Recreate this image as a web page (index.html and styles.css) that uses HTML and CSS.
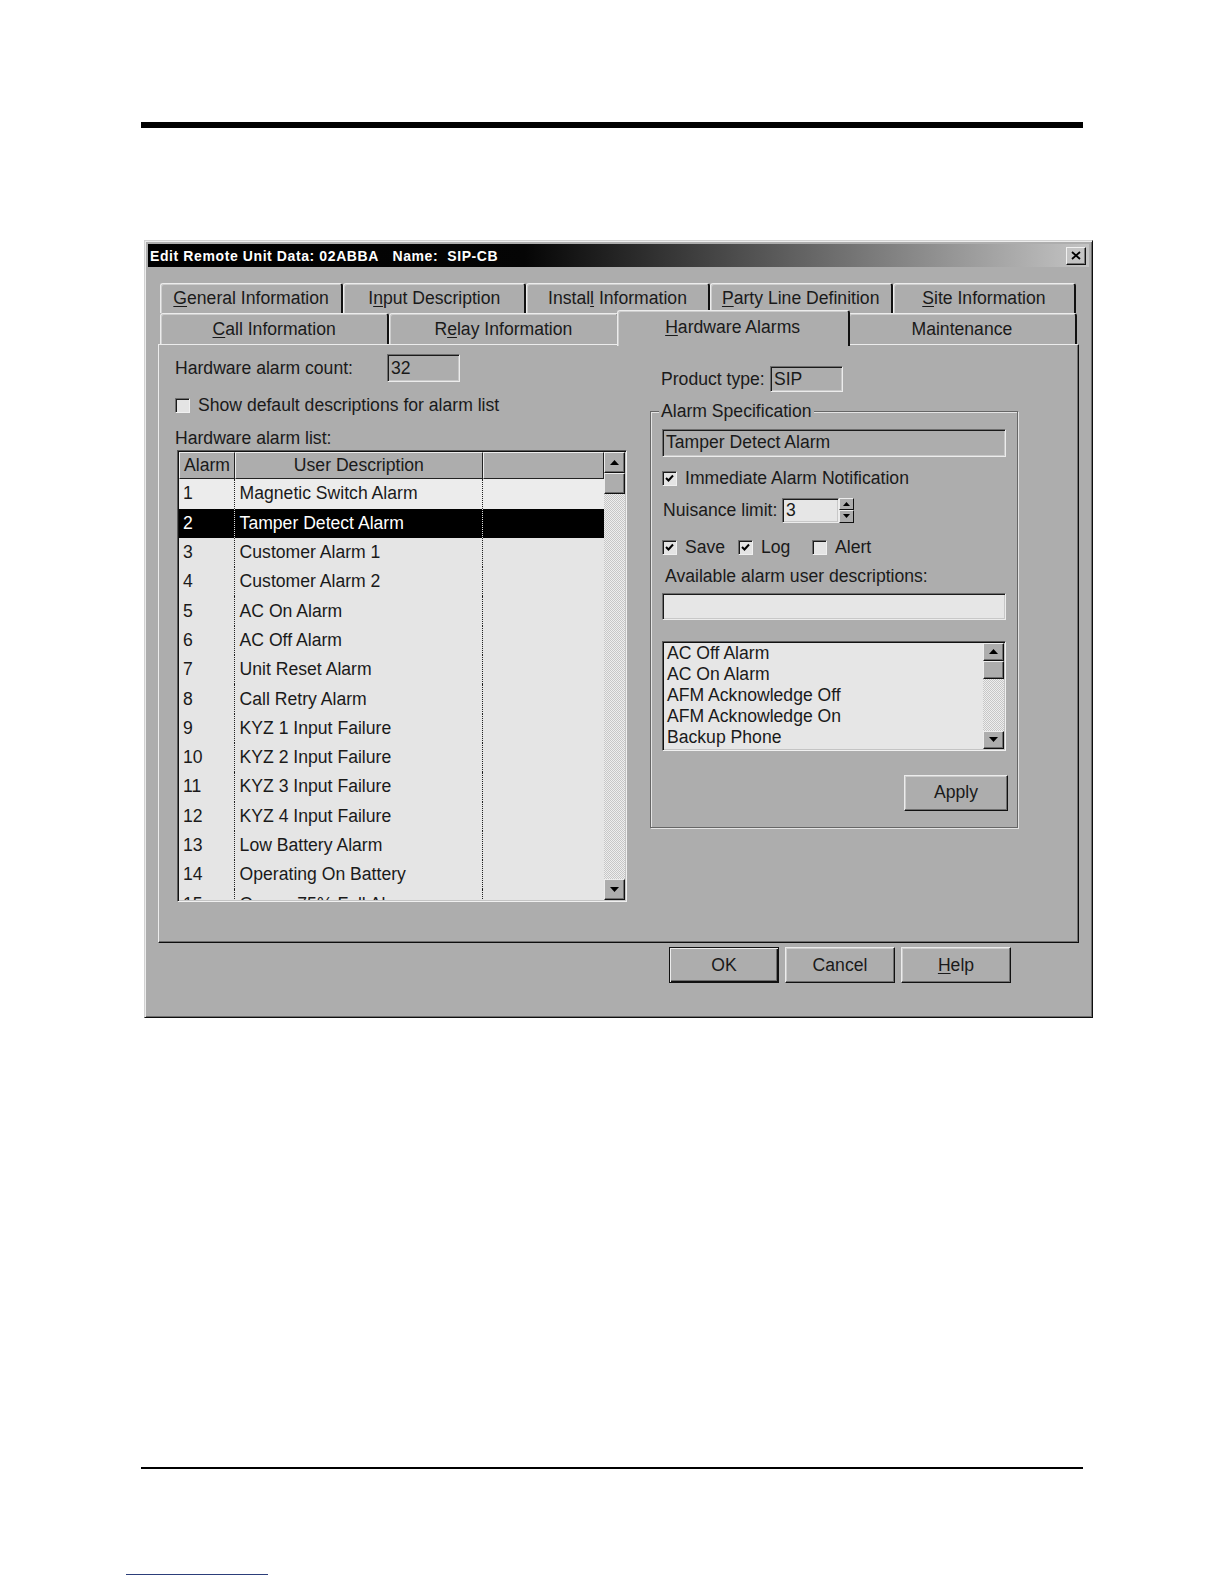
FILE: index.html
```html
<!DOCTYPE html>
<html>
<head>
<meta charset="utf-8">
<title>Edit Remote Unit Data</title>
<link rel="stylesheet" href="styles.css">
</head>
<body>
<div class="page">
  <div class="rule-top"></div>

  <div class="dialog">
    <div class="titlebar">
      <span class="title">Edit Remote Unit Data: 02ABBA&nbsp;&nbsp; Name:&nbsp; SIP-CB</span>
      <span class="close"><svg viewBox="0 0 10 9" width="10" height="9"><path d="M1 1 L9 8 M9 1 L1 8" stroke="#000" stroke-width="1.8" fill="none"/></svg></span>
    </div>

    <div class="tabs">
      <div class="tabrow row1">
        <div class="tab"><span><u>G</u>eneral Information</span></div>
        <div class="tab"><span>I<u>n</u>put Description</span></div>
        <div class="tab"><span>Instal<u>l</u> Information</span></div>
        <div class="tab"><span><u>P</u>arty Line Definition</span></div>
        <div class="tab"><span><u>S</u>ite Information</span></div>
      </div>
      <div class="tabrow row2">
        <div class="tab"><span><u>C</u>all Information</span></div>
        <div class="tab"><span>R<u>e</u>lay Information</span></div>
        <div class="tab active"><span><u>H</u>ardware Alarms</span></div>
        <div class="tab"><span>Maintenance</span></div>
      </div>
    </div>

    <div class="panel">
      <div class="col-left">
        <div class="count-row">
          <span class="lbl">Hardware alarm count:</span>
          <span class="field count-input">32</span>
        </div>
        <div class="check-row">
          <span class="cb"></span>
          <span>Show default descriptions for alarm list</span>
        </div>
        <div class="list-label">Hardware alarm list:</div>
        <div class="list">
          <div class="list-body">
            <div class="grid-head">
              <span class="hcell">Alarm</span>
              <span class="hcell center">User Description</span>
              <span class="hcell"></span>
            </div>
            <div class="row first"><span>1</span><span>Magnetic Switch Alarm</span><span></span></div>
            <div class="row selected"><span>2</span><span>Tamper Detect Alarm</span><span></span></div>
            <div class="row"><span>3</span><span>Customer Alarm 1</span><span></span></div>
            <div class="row"><span>4</span><span>Customer Alarm 2</span><span></span></div>
            <div class="row"><span>5</span><span>AC On Alarm</span><span></span></div>
            <div class="row"><span>6</span><span>AC Off Alarm</span><span></span></div>
            <div class="row"><span>7</span><span>Unit Reset Alarm</span><span></span></div>
            <div class="row"><span>8</span><span>Call Retry Alarm</span><span></span></div>
            <div class="row"><span>9</span><span>KYZ 1 Input Failure</span><span></span></div>
            <div class="row"><span>10</span><span>KYZ 2 Input Failure</span><span></span></div>
            <div class="row"><span>11</span><span>KYZ 3 Input Failure</span><span></span></div>
            <div class="row"><span>12</span><span>KYZ 4 Input Failure</span><span></span></div>
            <div class="row"><span>13</span><span>Low Battery Alarm</span><span></span></div>
            <div class="row"><span>14</span><span>Operating On Battery</span><span></span></div>
            <div class="row"><span>15</span><span>Queue 75% Full Alarm</span><span></span></div>
          </div>
          <div class="vscroll">
            <span class="sbtn"><svg viewBox="0 0 9 5" width="9" height="5"><polygon points="0,5 4.5,0 9,5" fill="#000"/></svg></span>
            <span class="sbtn thumb"></span>
            <span class="track"></span>
            <span class="sbtn"><svg viewBox="0 0 9 5" width="9" height="5"><polygon points="0,0 4.5,5 9,0" fill="#000"/></svg></span>
          </div>
        </div>
      </div>

      <div class="col-right">
        <div class="ptype-row">
          <span class="lbl">Product type:</span>
          <span class="field ptype-input">SIP</span>
        </div>
        <div class="group">
          <span class="group-title">Alarm Specification</span>
          <span class="field spec-input">Tamper Detect Alarm</span>
          <div class="check-row imm-row">
            <span class="cb"><svg viewBox="0 0 9 9" width="9" height="9"><path d="M1 4 L3.5 6.5 L8 1.5" stroke="#000" stroke-width="2" fill="none"/></svg></span>
            <span>Immediate Alarm Notification</span>
          </div>
          <div class="nuis-row">
            <span class="lbl">Nuisance limit:</span>
            <span class="field spin-input">3</span>
            <span class="spin">
              <span class="spin-btn"><svg viewBox="0 0 7 4" width="7" height="4"><polygon points="0,4 3.5,0 7,4" fill="#000"/></svg></span>
              <span class="spin-btn"><svg viewBox="0 0 7 4" width="7" height="4"><polygon points="0,0 3.5,4 7,0" fill="#000"/></svg></span>
            </span>
          </div>
          <div class="flags-row">
            <span class="flag f-save"><span class="cb"><svg viewBox="0 0 9 9" width="9" height="9"><path d="M1 4 L3.5 6.5 L8 1.5" stroke="#000" stroke-width="2" fill="none"/></svg></span><span>Save</span></span>
            <span class="flag f-log"><span class="cb"><svg viewBox="0 0 9 9" width="9" height="9"><path d="M1 4 L3.5 6.5 L8 1.5" stroke="#000" stroke-width="2" fill="none"/></svg></span><span>Log</span></span>
            <span class="flag"><span class="cb"></span><span>Alert</span></span>
          </div>
          <div class="avail-label">Available alarm user descriptions:</div>
          <span class="field avail-input"></span>
          <div class="avail-list">
            <div class="avail-items">
              <div>AC Off Alarm</div>
              <div>AC On Alarm</div>
              <div>AFM Acknowledge Off</div>
              <div>AFM Acknowledge On</div>
              <div>Backup Phone</div>
            </div>
            <div class="vscroll">
              <span class="sbtn small"><svg viewBox="0 0 9 5" width="9" height="5"><polygon points="0,5 4.5,0 9,5" fill="#000"/></svg></span>
              <span class="sbtn small thumb"></span>
              <span class="track"></span>
              <span class="sbtn small"><svg viewBox="0 0 9 5" width="9" height="5"><polygon points="0,0 4.5,5 9,0" fill="#000"/></svg></span>
            </div>
          </div>
          <span class="btn apply">Apply</span>
        </div>
      </div>
    </div>

    <div class="buttons">
      <span class="btn default">OK</span>
      <span class="btn">Cancel</span>
      <span class="btn"><span><u>H</u>elp</span></span>
    </div>
  </div>

  <div class="rule-bottom"></div>
  <div class="foot-line"></div>
</div>
</body>
</html>
```

FILE: styles.css
```css
* { box-sizing: border-box; }
html, body { margin: 0; padding: 0; background: #fff; }
body {
  font-family: "Liberation Sans", Arial, sans-serif;
  font-size: 17.6px;
  color: #1a1a1a;
}
u { text-decoration: underline; text-underline-offset: 2px; text-decoration-thickness: 1px; }

.page { padding: 122px 0 0 141px; width: 1224px; height: 1584px; overflow: hidden; }
.rule-top { width: 942px; height: 6px; background: #000; }

.dialog {
  margin: 112px 0 0 3px;
  width: 949px;
  height: 778px;
  background: #adadad;
  border: 1px solid;
  border-color: #d2d2d2 #0e0e0e #0e0e0e #d2d2d2;
  box-shadow: inset 1px 1px 0 #ececec, inset -1px -1px 0 #6f6f6f;
  padding: 3px;
  display: flex;
  flex-direction: column;
}

.titlebar {
  height: 23px;
  flex: none;
  background: linear-gradient(to right, #000 0%, #050505 40%, #c4c4c4 100%);
  display: flex;
  align-items: center;
  justify-content: space-between;
  padding: 0 3px 0 2px;
  color: #fff;
  font-weight: bold;
  font-size: 14px;
  letter-spacing: 0.6px;
}
.close {
  width: 20px; height: 18px;
  background: #c4c4c4;
  border: 1px solid; border-color: #f0f0f0 #111 #111 #f0f0f0;
  box-shadow: inset -1px -1px 0 #777;
  display: flex; align-items: center; justify-content: center;
}

.tabs { margin: 16px 0 0 12px; width: 917px; flex: none; }
.tabrow { display: grid; }
.row1 { grid-template-columns: repeat(5, 1fr); width: 916px; height: 30px; }
.row2 { grid-template-columns: repeat(4, 1fr); height: 31px; }
.tab {
  display: flex; align-items: center; justify-content: center;
  background: #adadad;
  border-top: 1px solid #ececec;
  border-left: 1px solid #ececec;
  border-right: 2px solid #111;
  border-radius: 3px 3px 0 0;
  box-shadow: inset 1px 1px 0 #cdcdcd;
  white-space: nowrap;
}
.tab.active {
  position: relative;
  z-index: 1;
  margin: -3px -2px -2px -2px;
  padding-bottom: 3px;
}

.panel {
  margin-left: 10px;
  width: 921px;
  height: 599px;
  flex: none;
  border: 1px solid;
  border-color: #ececec #0e0e0e #0e0e0e #ececec;
  box-shadow: inset -1px -1px 0 #6e6e6e;
  padding: 9px 0 0 16px;
  display: flex;
  gap: 23px;
}

/* generic sunken field */
.field {
  display: flex; align-items: center;
  padding-left: 3px;
  border: 1px solid;
  border-color: #6e6e6e #ececec #ececec #6e6e6e;
  box-shadow: inset 1px 1px 0 #1a1a1a, inset -1px -1px 0 #c8c8c8;
  background: #adadad;
  white-space: nowrap;
}

.col-left { width: 452px; display: flex; flex-direction: column; }
.count-row { display: flex; align-items: center; height: 28px; }
.count-row .lbl { width: 212px; }
.count-input { width: 73px; height: 28px; }

.check-row { display: flex; align-items: center; gap: 8px; height: 17px; margin-top: 15px; }
.cb {
  width: 15px; height: 15px; flex: none;
  background: #e4e4e4;
  border: 1px solid; border-color: #6e6e6e #f0f0f0 #f0f0f0 #6e6e6e;
  box-shadow: inset 1px 1px 0 #1a1a1a;
  display: flex; align-items: center; justify-content: center;
}

.list-label { margin-top: 15px; line-height: 18px; }

.list {
  margin: 3px 0 0 2px;
  width: 450px; height: 452px;
  border: 1px solid; border-color: #5a5a5a #f0f0f0 #f0f0f0 #5a5a5a;
  box-shadow: inset 1px 1px 0 #111, inset -1px -1px 0 #c4c4c4;
  padding: 1px;
  display: flex;
  background: #e5e5e5;
}
.list-body { flex: 1; overflow: hidden; }
.grid-head { display: grid; grid-template-columns: 55.6px 248.6px 1fr; height: 27.3px; background: #adadad; }
.hcell {
  display: flex; align-items: center;
  padding-left: 4px;
  border-top: 1px solid #ececec;
  border-left: 1px solid #ececec;
  border-right: 1px solid #222;
  border-bottom: 1px solid #222;
}
.hcell.center { justify-content: center; padding-left: 0; }

.row { display: grid; grid-template-columns: 55.6px 248.6px 1fr; height: 29.3px; white-space: nowrap; }
.row > span { display: flex; align-items: center; height: 29.3px; overflow: hidden; }
.row > span:nth-child(1) { padding-left: 4px; border-right: 1px dotted #222; }
.row > span:nth-child(2) { padding-left: 5px; border-right: 1px dotted #222; }
.row.first { background: #ececec; }
.row.selected { background: #000; color: #fff; }
.row.selected > span:nth-child(1),
.row.selected > span:nth-child(2) { border-right-color: #ddd; }

.vscroll { width: 21px; flex: none; display: flex; flex-direction: column; }
.sbtn {
  width: 21px; height: 21px; flex: none;
  background: #adadad;
  border: 1px solid; border-color: #ececec #111 #111 #ececec;
  box-shadow: inset -1px -1px 0 #6e6e6e;
  display: flex; align-items: center; justify-content: center;
}
.sbtn.small { height: 18px; }
.track {
  flex: 1;
  background: repeating-conic-gradient(#eeeeee 0 25%, #c6c6c6 0 50%) 0 0 / 2px 2px;
}

.col-right { width: 368px; display: flex; flex-direction: column; }
.ptype-row { margin-top: 12px; padding-left: 11px; display: flex; align-items: center; height: 26px; }
.ptype-row .lbl { width: 109px; }
.ptype-input { width: 73px; height: 26px; }

.group {
  position: relative;
  margin-top: 19px;
  height: 417px;
  border: 1px solid #666;
  box-shadow: inset 1px 1px 0 #e4e4e4, 1px 1px 0 #e4e4e4;
  padding: 16.5px 11px 0 11px;
  display: flex; flex-direction: column;
}
.group-title {
  position: absolute; top: -10px; left: 8px;
  padding: 0 2px;
  line-height: 18px;
  background: #adadad;
}
.spec-input { width: 344px; height: 28px; flex: none; }
.imm-row { margin-top: 14px; height: 16px; }
.nuis-row { margin-top: 11px; display: flex; align-items: center; height: 25px; }
.nuis-row .lbl { width: 120px; padding-left: 1px; }
.spin-input { width: 57px; height: 25px; background: #e6e6e6; }
.spin { display: flex; flex-direction: column; width: 15px; height: 25px; }
.spin-btn {
  flex: 1;
  background: #adadad;
  border: 1px solid; border-color: #ececec #111 #111 #ececec;
  display: flex; align-items: center; justify-content: center;
}
.flags-row { margin-top: 17px; display: flex; align-items: center; height: 16px; }
.flag { display: flex; align-items: center; gap: 8px; }
.f-save { width: 76px; }
.f-log { width: 74px; }
.avail-label { margin-top: 11px; padding-left: 3px; line-height: 18px; }
.avail-input { margin-top: 8px; width: 344px; height: 27px; background: #e6e6e6; flex: none; }
.avail-list {
  margin-top: 21px;
  width: 344px; height: 110px; flex: none;
  border: 1px solid; border-color: #5a5a5a #f0f0f0 #f0f0f0 #5a5a5a;
  box-shadow: inset 1px 1px 0 #111, inset -1px -1px 0 #c4c4c4;
  padding: 1px;
  background: #e6e6e6;
  display: flex;
}
.avail-items { flex: 1; padding-left: 3px; line-height: 21.2px; overflow: hidden; white-space: nowrap; }

.btn {
  width: 110px; height: 36px;
  display: flex; align-items: center; justify-content: center;
  background: #adadad;
  border: 1px solid; border-color: #ececec #111 #111 #ececec;
  box-shadow: inset -1px -1px 0 #6e6e6e, inset 1px 1px 0 #cdcdcd;
}
.btn.default {
  border-color: #111;
  box-shadow: inset 1px 1px 0 #ececec, inset -1px -1px 0 #111, inset -2px -2px 0 #6e6e6e;
}
.apply { width: 104px; margin-top: 24px; align-self: flex-end; margin-right: -2px; }

.buttons { margin: 4px 0 0 521px; display: flex; gap: 6px; }

.rule-bottom { margin-top: 449px; width: 942px; height: 2px; background: #000; }
.foot-line { margin: 105px 0 0 -15px; width: 142px; height: 1px; background: #2c3e7a; }
```
